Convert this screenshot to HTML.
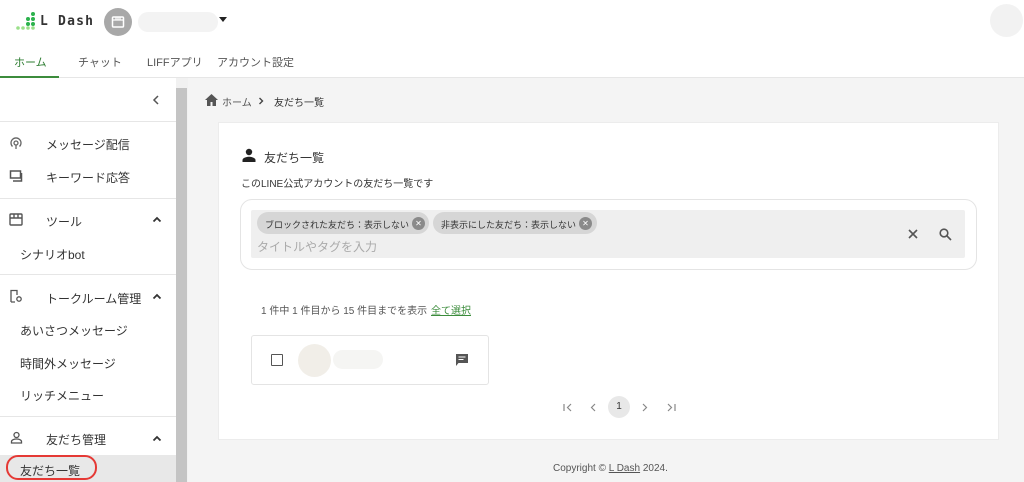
<!DOCTYPE html>
<html><head><meta charset="utf-8"><style>
*{box-sizing:border-box;margin:0;padding:0}
body{width:1024px;height:482px;overflow:hidden;background:#f4f4f4;font-family:"Liberation Sans","Noto Sans CJK JP",sans-serif;color:#333;position:relative;font-size:12px}
.abs{position:absolute}
.hdr{left:0;top:0;width:1024px;height:78px;background:#fff;border-bottom:1px solid #e6e6e6}
.tab{top:54px;font-size:11px;color:#555}
.side{left:0;top:78px;width:176px;height:404px;background:#fff}
.sb{left:176px;top:88px;width:11px;height:394px;background:#c4c4c4}
.sbt{left:176px;top:78px;width:12px;height:404px;background:#f1f1f1}
.it{left:0;width:176px;font-size:12px;color:#333}
.hr{left:0;width:176px;height:1px;background:#e6e6e6}
.card{left:218px;top:122px;width:781px;height:318px;background:#fff;border:1px solid #ececec}
.chip{top:212px;height:22px;border-radius:11px;background:#d6d6d6;font-size:9px;color:#333;padding:6px 0 0 8px;white-space:nowrap}
.x{position:absolute;top:4.5px;width:13px;height:13px;border-radius:50%;background:#8a8a8a;color:#fff;font-size:8px;line-height:13px;text-align:center}
.chev{position:absolute;left:152px}
</style></head><body>
<div class="abs hdr"></div>
<svg class="abs" style="left:14px;top:11px" width="24" height="20" viewBox="0 0 24 20">
<g fill="#2bb24c"><circle cx="19" cy="3" r="2"/><circle cx="14" cy="8" r="2"/><circle cx="19" cy="8" r="2"/><circle cx="14" cy="13" r="2"/><circle cx="19" cy="13" r="2"/></g>
<g fill="#9be08a"><circle cx="4" cy="17" r="1.8"/><circle cx="9" cy="17" r="1.8"/><circle cx="14" cy="17" r="1.8"/><circle cx="19" cy="17" r="1.8"/></g></svg>
<div class="abs" style="left:40px;top:14px;font-size:13px;font-weight:bold;letter-spacing:1.2px;color:#333;font-family:'DejaVu Sans Mono',monospace">L Dash</div>
<div class="abs" style="left:104px;top:8px;width:28px;height:28px;border-radius:50%;background:#a8a8a8"></div>
<svg class="abs" style="left:111px;top:15px" width="14" height="14" viewBox="0 0 14 14"><rect x="1.5" y="2" width="11" height="10" rx="1" fill="none" stroke="#fff" stroke-width="1.5"/><path d="M2 5h10M5 2v3M7 2v3M9 2v3" stroke="#fff" stroke-width="1.2"/></svg>
<div class="abs" style="left:138px;top:12px;width:80px;height:20px;border-radius:10px;background:#f3f3f3"></div>
<div class="abs" style="left:219px;top:17px;width:0;height:0;border-left:4px solid transparent;border-right:4px solid transparent;border-top:5px solid #222"></div>
<div class="abs" style="left:990px;top:4px;width:33px;height:33px;border-radius:50%;background:#f2f2f2"></div>
<div class="abs tab" style="left:14px;color:#2e7d32">ホーム</div>
<div class="abs" style="left:0;top:76px;width:59px;height:2px;background:#3c8c3c"></div>
<div class="abs tab" style="left:78px">チャット</div>
<div class="abs tab" style="left:147px">LIFFアプリ</div>
<div class="abs tab" style="left:217px">アカウント設定</div>

<div class="abs sbt"></div><div class="abs sb"></div>
<div class="abs side"></div>
<svg class="abs" style="left:152px;top:95px" width="8" height="10" viewBox="0 0 8 10"><path d="M6 1L2 5l4 4" fill="none" stroke="#555" stroke-width="1.5"/></svg>
<div class="abs hr" style="top:121px"></div>
<svg class="abs" style="left:9px;top:136px" width="14" height="14" viewBox="0 0 14 14" fill="none" stroke="#666" stroke-width="1.3"><circle cx="7" cy="7" r="2"/><path d="M3.5 10.5a5 5 0 1 1 7 0M7 9v4"/></svg>
<div class="abs it" style="left:46px;top:136px">メッセージ配信</div>
<svg class="abs" style="left:9px;top:169px" width="14" height="14" viewBox="0 0 14 14" fill="none" stroke="#555" stroke-width="1.5"><path d="M1.5 2h10v7h-10zM4 12h8.5V4"/></svg>
<div class="abs it" style="left:46px;top:169px">キーワード応答</div>
<div class="abs hr" style="top:198px"></div>
<svg class="abs" style="left:9px;top:213px" width="14" height="13" viewBox="0 0 14 13" fill="none" stroke="#555" stroke-width="1.4"><rect x="1" y="1" width="12" height="11" rx="1"/><path d="M1 5h12M5 1v4M9 1v4"/></svg>
<div class="abs it" style="left:46px;top:213px">ツール</div>
<svg class="chev" style="top:216px" width="10" height="7" viewBox="0 0 10 7"><path d="M1.5 5.5L5 2l3.5 3.5" fill="none" stroke="#333" stroke-width="1.8"/></svg>
<div class="abs it" style="left:20px;top:246px">シナリオbot</div>
<div class="abs hr" style="top:274px"></div>
<svg class="abs" style="left:9px;top:289px" width="14" height="14" viewBox="0 0 14 14" fill="none" stroke="#555" stroke-width="1.3"><path d="M2 13V1.5h6V6M2 13h4"/><circle cx="10" cy="10" r="2.2"/></svg>
<div class="abs it" style="left:46px;top:290px">トークルーム管理</div>
<svg class="chev" style="top:293px" width="10" height="7" viewBox="0 0 10 7"><path d="M1.5 5.5L5 2l3.5 3.5" fill="none" stroke="#333" stroke-width="1.8"/></svg>
<div class="abs it" style="left:20px;top:322px">あいさつメッセージ</div>
<div class="abs it" style="left:20px;top:355px">時間外メッセージ</div>
<div class="abs it" style="left:20px;top:387px">リッチメニュー</div>
<div class="abs hr" style="top:416px"></div>
<svg class="abs" style="left:10px;top:431px" width="13" height="13" viewBox="0 0 13 13" fill="none" stroke="#555" stroke-width="1.3"><circle cx="6.5" cy="4" r="2.5"/><path d="M1.5 12v-1.5c0-1.5 2.5-2.5 5-2.5s5 1 5 2.5V12z"/></svg>
<div class="abs it" style="left:46px;top:431px">友だち管理</div>
<svg class="chev" style="top:435px" width="10" height="7" viewBox="0 0 10 7"><path d="M1.5 5.5L5 2l3.5 3.5" fill="none" stroke="#333" stroke-width="1.8"/></svg>
<div class="abs" style="left:0;top:455px;width:176px;height:27px;background:#e8e8e8"></div>
<div class="abs" style="left:6px;top:455px;width:91px;height:25px;border:2.5px solid #e53935;border-radius:12px"></div>
<div class="abs it" style="left:20px;top:462px">友だち一覧</div>

<svg class="abs" style="left:205px;top:94px" width="13" height="12" viewBox="0 0 13 12"><path d="M6.5 0L0 6h2v6h3.5V8h2v4H11V6h2z" fill="#555"/></svg>
<div class="abs" style="left:222px;top:94px;font-size:10px;color:#555">ホーム</div>
<svg class="abs" style="left:258px;top:97px" width="6" height="8" viewBox="0 0 6 8"><path d="M1.5 1l3 3-3 3" fill="none" stroke="#444" stroke-width="1.4"/></svg>
<div class="abs" style="left:274px;top:94px;font-size:10px;color:#333">友だち一覧</div>

<div class="abs card"></div>
<svg class="abs" style="left:242px;top:148px" width="14" height="14" viewBox="0 0 14 14" fill="#222"><circle cx="7" cy="4" r="3.2"/><path d="M0.5 14v-2c0-2 4-3.2 6.5-3.2S13.5 10 13.5 12v2z"/></svg>
<div class="abs" style="left:264px;top:149px;font-size:12px;color:#333">友だち一覧</div>
<div class="abs" style="left:241px;top:175px;font-size:10px;color:#333">このLINE公式アカウントの友だち一覧です</div>
<div class="abs" style="left:240px;top:199px;width:737px;height:71px;border:1px solid #e4e4e4;border-radius:12px"></div>
<div class="abs" style="left:251px;top:210px;width:714px;height:48px;background:#efefef;border-radius:2px"></div>
<div class="abs chip" style="left:257px;width:172px">ブロックされた友だち：表示しない<span class="x" style="left:155px">✕</span></div>
<div class="abs chip" style="left:433px;width:164px">非表示にした友だち：表示しない<span class="x" style="left:146px">✕</span></div>
<div class="abs" style="left:257px;top:238px;font-size:12px;color:#aaa">タイトルやタグを入力</div>
<svg class="abs" style="left:908px;top:229px" width="10" height="10" viewBox="0 0 10 10"><path d="M1 1l8 8M9 1l-8 8" stroke="#555" stroke-width="1.6"/></svg>
<svg class="abs" style="left:939px;top:228px" width="13" height="13" viewBox="0 0 13 13" fill="none" stroke="#555" stroke-width="1.6"><circle cx="5" cy="5" r="3.8"/><path d="M8 8l4 4"/></svg>
<div class="abs" style="left:261px;top:302px;font-size:10px;color:#555">1 件中 1 件目から 15 件目までを表示</div>
<div class="abs" style="left:431px;top:302px;font-size:10px;color:#3c8c3c;text-decoration:underline">全て選択</div>
<div class="abs" style="left:251px;top:335px;width:238px;height:50px;border:1px solid #e4e4e4;border-radius:3px;background:#fff"></div>
<div class="abs" style="left:271px;top:354px;width:12px;height:12px;border:1.8px solid #555;border-radius:1px"></div>
<div class="abs" style="left:298px;top:344px;width:33px;height:33px;border-radius:50%;background:#f1eee8"></div>
<div class="abs" style="left:333px;top:350px;width:50px;height:19px;border-radius:10px;background:#f5f5f3"></div>
<svg class="abs" style="left:455px;top:353px" width="14" height="14" viewBox="0 0 14 14"><path d="M1 1h12v9H3.5L1 13z" fill="#555"/><path d="M3.5 4h7M3.5 6.5h5" stroke="#fff" stroke-width="1"/></svg>
<svg class="abs" style="left:563px;top:403px" width="10" height="9" viewBox="0 0 10 9" fill="none" stroke="#888" stroke-width="1.2"><path d="M1 1v7M8 1L4.5 4.5 8 8"/></svg>
<svg class="abs" style="left:590px;top:403px" width="6" height="9" viewBox="0 0 6 9" fill="none" stroke="#888" stroke-width="1.2"><path d="M5 1L1.5 4.5 5 8"/></svg>
<div class="abs" style="left:608px;top:396px;width:22px;height:22px;border-radius:50%;background:#e8e8e8;font-size:10px;text-align:center;line-height:22px;color:#333">1</div>
<svg class="abs" style="left:642px;top:403px" width="6" height="9" viewBox="0 0 6 9" fill="none" stroke="#888" stroke-width="1.2"><path d="M1 1l3.5 3.5L1 8"/></svg>
<svg class="abs" style="left:666px;top:403px" width="10" height="9" viewBox="0 0 10 9" fill="none" stroke="#888" stroke-width="1.2"><path d="M2 1l3.5 3.5L2 8M9 1v7"/></svg>
<div class="abs" style="left:553px;top:463px;font-size:10px;color:#555">Copyright © <u>L Dash</u> 2024.</div>
</body></html>
